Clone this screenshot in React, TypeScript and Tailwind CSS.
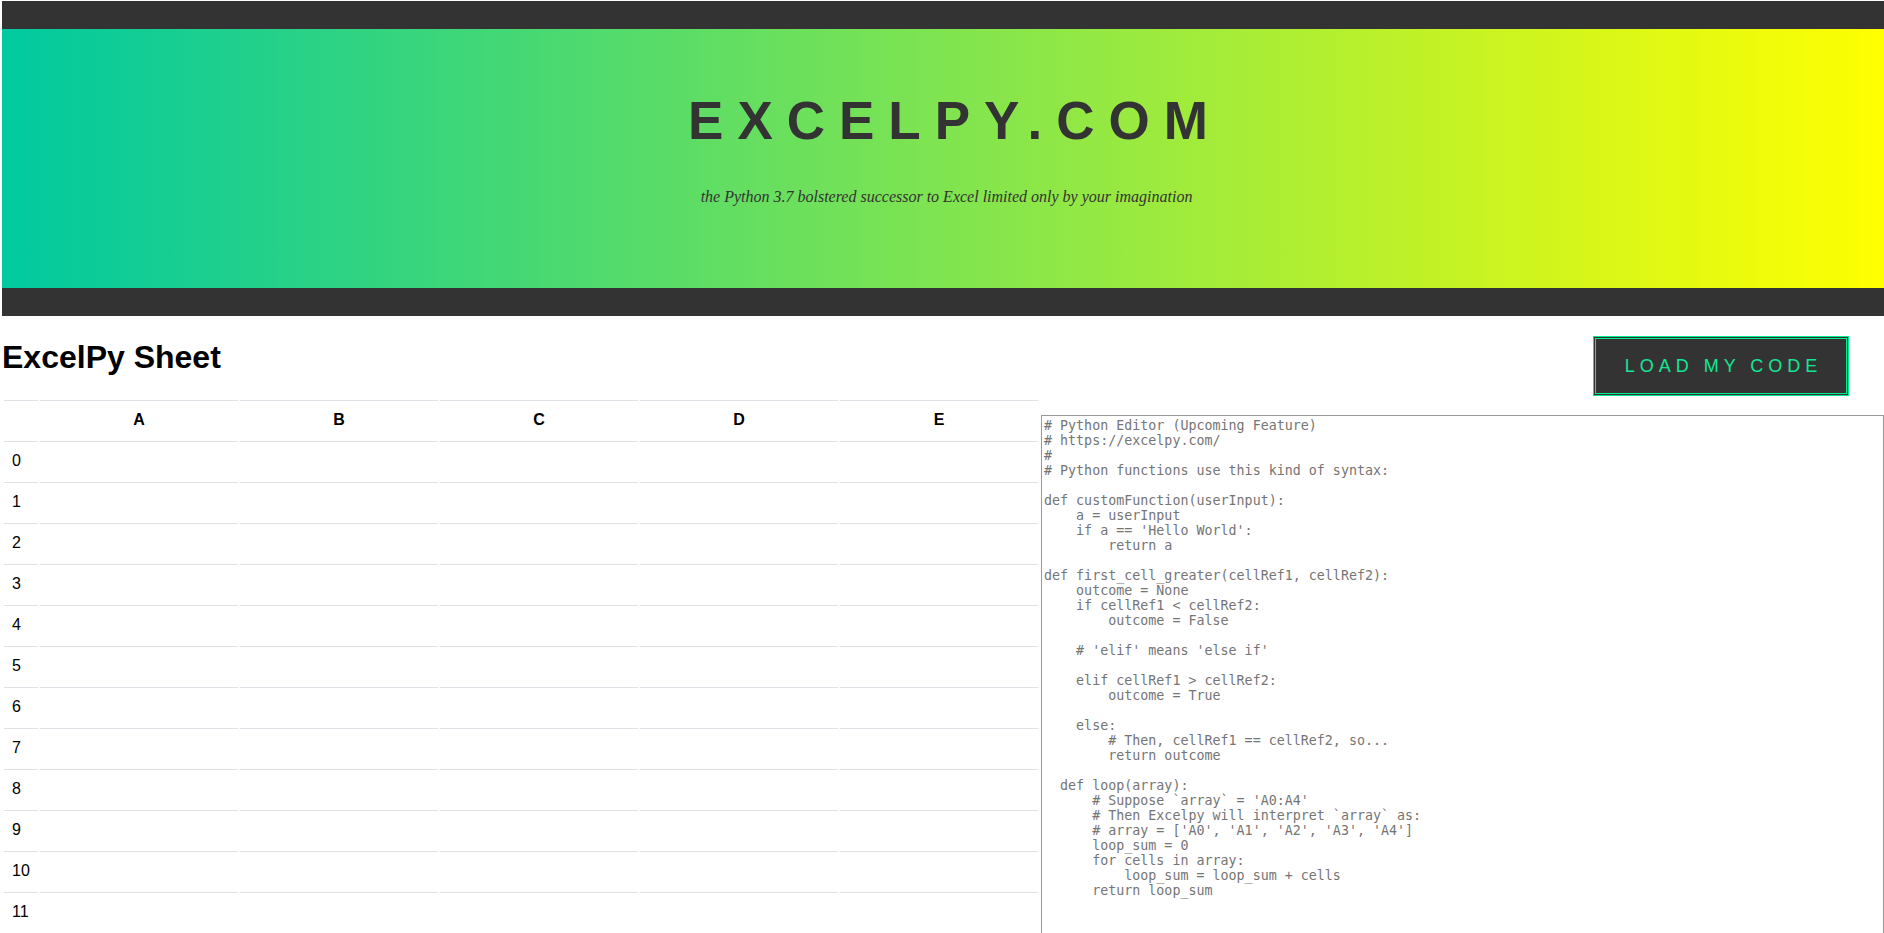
import React from "react";

const code = `# Python Editor (Upcoming Feature)
# https://excelpy.com/
#
# Python functions use this kind of syntax:

def customFunction(userInput):
    a = userInput
    if a == 'Hello World':
        return a

def first_cell_greater(cellRef1, cellRef2):
    outcome = None
    if cellRef1 < cellRef2:
        outcome = False

    # 'elif' means 'else if'

    elif cellRef1 > cellRef2:
        outcome = True

    else:
        # Then, cellRef1 == cellRef2, so...
        return outcome

  def loop(array):
      # Suppose \`array\` = 'A0:A4'
      # Then Excelpy will interpret \`array\` as:
      # array = ['A0', 'A1', 'A2', 'A3', 'A4']
      loop_sum = 0
      for cells in array:
          loop_sum = loop_sum + cells
      return loop_sum`;

const cols = ["A", "B", "C", "D", "E"];
const rows = Array.from({ length: 13 }, (_, i) => i);

export default function App() {
  return (
    <div className="h-[933px] overflow-hidden bg-white font-['Liberation_Sans',Arial,sans-serif] text-black">
      <div className="pl-[2px] pt-px">
        <header className="w-[1882px]">
          <div className="h-[28px] bg-[#333333]" />
          <div className="flex h-[259px] flex-col items-center bg-[linear-gradient(to_right,#00c9a0,#ffff00)]">
            <h1 className="mt-[65px] pl-[24px] text-[53px] font-bold leading-[53px] tracking-[14px] text-[#333333]">
              EXCELPY.COM
            </h1>
            <p className="mt-[38px] pl-[7px] font-['Liberation_Serif','Times_New_Roman',serif] text-[16px] italic leading-[24px] text-[#333333]">
              the Python 3.7 bolstered successor to Excel limited only by your imagination
            </p>
          </div>
          <div className="h-[28px] bg-[#333333]" />
        </header>

        <div className="flex">
          <div className="w-[1038px] shrink-0">
            <h2 className="mb-[22px] mt-[23px] text-[32px] font-bold leading-[37px]">ExcelPy Sheet</h2>
            <table className="w-[1038px] table-fixed border-separate border-spacing-[2px] text-[16px]">
              <colgroup>
                <col className="w-[34px]" />
                {cols.map((c) => (
                  <col key={c} className="w-[198px]" />
                ))}
              </colgroup>
              <thead>
                <tr>
                  <th className="h-[39px] border-t border-[#dee2e6] p-0" />
                  {cols.map((c) => (
                    <th
                      key={c}
                      className="h-[39px] border-t border-[#dee2e6] p-0 text-center font-bold leading-[22px]"
                    >
                      {c}
                    </th>
                  ))}
                </tr>
              </thead>
              <tbody>
                {rows.map((r) => (
                  <tr key={r}>
                    <td className="h-[39px] border-t border-[#dee2e6] py-0 pl-[8px] pr-0 text-left leading-[22px]">
                      {r < 12 ? r : ""}
                    </td>
                    {cols.map((c) => (
                      <td key={c} className="h-[39px] border-t border-[#dee2e6] p-0" />
                    ))}
                  </tr>
                ))}
              </tbody>
            </table>
          </div>

          <div className="flex min-w-0 flex-1 flex-col items-end">
            <button
              type="button"
              className="mr-[35px] mt-[20px] flex h-[60px] w-[256px] items-center justify-center border-[3px] border-double border-[#00ec8f] bg-[#333333] pl-[5px] text-[18px] leading-none tracking-[5px] text-[#14e696]"
            >
              LOAD MY CODE
            </button>
            <textarea
              readOnly
              value={code}
              className="ml-[1px] mt-[19px] h-[560px] w-[843px] resize-none overflow-hidden border border-[#999999] bg-white p-[2px] font-['DejaVu_Sans_Mono',monospace] text-[13.333px] leading-[15px] whitespace-pre text-[#757575] outline-none"
            />
          </div>
        </div>
      </div>
    </div>
  );
}
